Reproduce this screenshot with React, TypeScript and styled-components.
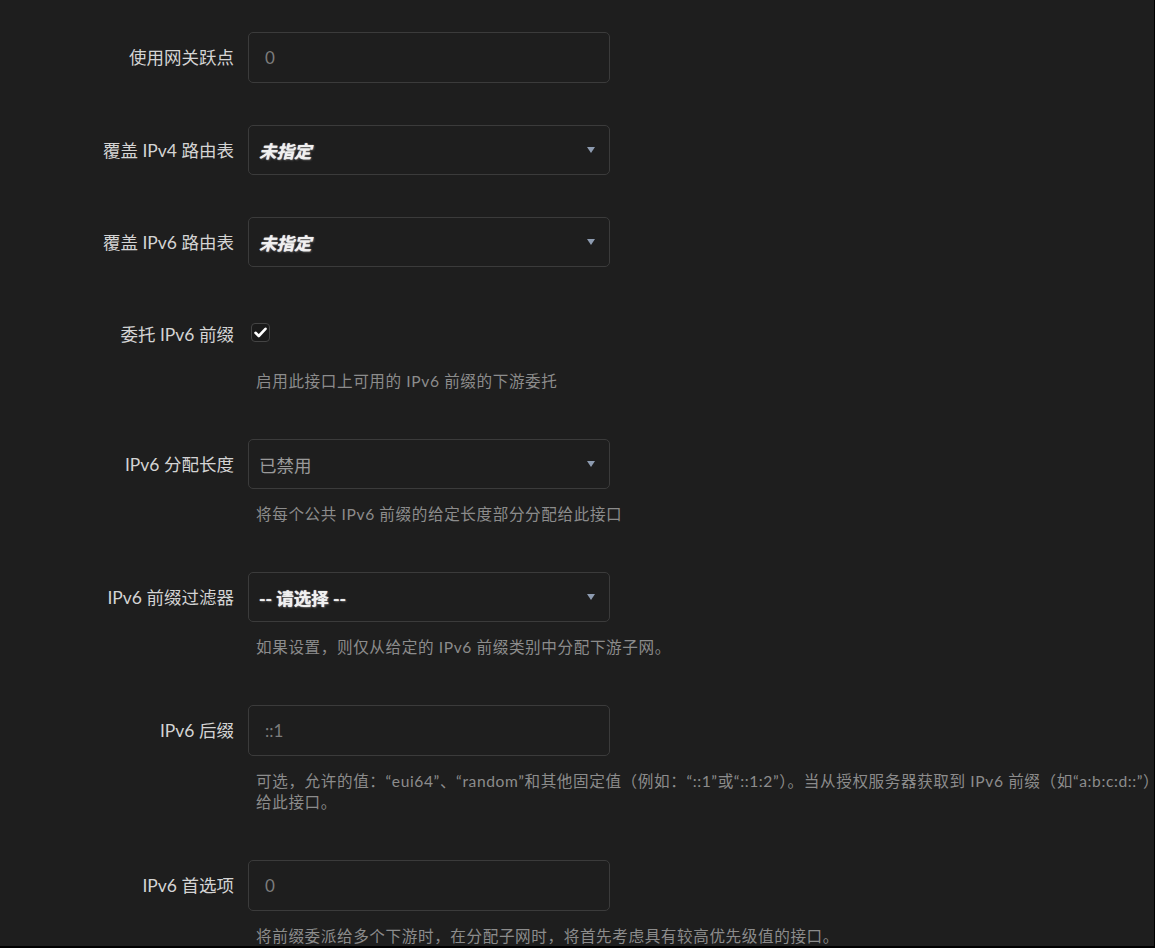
import React from "react";
import styled, { createGlobalStyle } from "styled-components";

const GlobalStyle = createGlobalStyle`
    html, body {
        margin: 0;
        padding: 0;
        background: #000;
        overflow: hidden;
    }

    body {
        font-family: "Lato", "Noto Sans CJK SC", sans-serif;
    }
`;

type FieldProps = {
    label: string;
    desc?: string[];
    children: React.ReactNode;
};

const Field = ({ label, desc, children }: FieldProps) => (
    <StyledRow>
        <StyledLabel>{label}</StyledLabel>
        <StyledControlCol>
            <StyledControl>{children}</StyledControl>
            {desc && (
                <StyledDesc>
                    {desc.map((line) => (
                        <div key={line}>{line}</div>
                    ))}
                </StyledDesc>
            )}
        </StyledControlCol>
    </StyledRow>
);

const Select = ({
    value,
    variant,
}: {
    value: string;
    variant: "italic" | "bold" | "plain";
}) => (
    <StyledSelectWrap>
        <StyledSelectValue $variant={variant}>{value}</StyledSelectValue>
    </StyledSelectWrap>
);

const App = () => {
    return (
        <>
            <GlobalStyle />
            <StyledPage>
                <Field label="使用网关跃点">
                    <StyledInput placeholder="0" />
                </Field>

                <Field label="覆盖 IPv4 路由表">
                    <Select value="未指定" variant="italic" />
                </Field>

                <Field label="覆盖 IPv6 路由表">
                    <Select value="未指定" variant="italic" />
                </Field>

                <Field
                    label="委托 IPv6 前缀"
                    desc={["启用此接口上可用的 IPv6 前缀的下游委托"]}
                >
                    <StyledCheckWrap>
                        <StyledCheckbox>
                            <svg width="13" height="11" viewBox="0 0 13 11">
                                <path
                                    d="M1.5 5.8 L4.8 9 L11.5 1.8"
                                    fill="none"
                                    stroke="#fff"
                                    strokeWidth="2.6"
                                    strokeLinecap="round"
                                    strokeLinejoin="round"
                                />
                            </svg>
                        </StyledCheckbox>
                    </StyledCheckWrap>
                </Field>

                <Field
                    label="IPv6 分配长度"
                    desc={["将每个公共 IPv6 前缀的给定长度部分分配给此接口"]}
                >
                    <Select value="已禁用" variant="plain" />
                </Field>

                <Field
                    label="IPv6 前缀过滤器"
                    desc={["如果设置，则仅从给定的 IPv6 前缀类别中分配下游子网。"]}
                >
                    <Select value="-- 请选择 --" variant="bold" />
                </Field>

                <Field
                    label="IPv6 后缀"
                    desc={[
                        "可选，允许的值：“eui64”、“random”和其他固定值（例如：“::1”或“::1:2”）。当从授权服务器获取到 IPv6 前缀（如“a:b:c:d::”）时，使用后缀（如“::1”）形成 IPv6 地址（“a:b:c:d::1”）并分配",
                        "给此接口。",
                    ]}
                >
                    <StyledInput placeholder="::1" />
                </Field>

                <Field
                    label="IPv6 首选项"
                    desc={[
                        "将前缀委派给多个下游时，在分配子网时，将首先考虑具有较高优先级值的接口。",
                    ]}
                >
                    <StyledInput placeholder="0" />
                </Field>
            </StyledPage>
        </>
    );
};

export default App;

const StyledPage = styled.div`
    width: 1154px;
    height: 946px;
    overflow: hidden;
    box-sizing: border-box;
    padding-top: 32px;
    background-color: #1e1e1e;
`;

const StyledRow = styled.div`
    display: flex;
    align-items: flex-start;
    margin-bottom: 42px;
`;

const StyledLabel = styled.div`
    box-sizing: border-box;
    width: 234px;
    height: 50px;
    padding-bottom: 2px;
    flex-shrink: 0;
    display: flex;
    align-items: center;
    justify-content: flex-end;

    font-size: 17.5px;
    color: #d4d4d4;
    white-space: nowrap;
`;

const StyledControlCol = styled.div`
    margin-left: 14px;
    display: flex;
    flex-direction: column;
`;

const StyledControl = styled.div`
    width: 362px;
`;

const StyledDesc = styled.div`
    margin: 15px 0 5px 8px;
    font-size: 15.6px;
    letter-spacing: 0.6px;
    line-height: 21px;
    color: #8c8c8c;
    white-space: nowrap;
`;

const StyledInput = styled.input`
    all: unset;
    box-sizing: border-box;
    width: 100%;
    height: 51px;
    padding: 0 16px;
    border: 1px solid #3b3b3b;
    border-radius: 5px;

    font-family: "Lato", "Noto Sans CJK SC", sans-serif;
    font-size: 17px;
    color: #cfcfcf;

    &::placeholder {
        color: #7c7c7c;
    }
`;

const StyledSelectWrap = styled.div`
    position: relative;
    box-sizing: border-box;
    width: 100%;
    height: 50px;
    padding: 0 10px;
    border: 1px solid #3b3b3b;
    border-radius: 5px;
    display: flex;
    align-items: center;

    &::after {
        content: "";
        position: absolute;
        right: 14px;
        top: 50%;
        margin-top: -3px;
        border-left: 4.5px solid transparent;
        border-right: 4.5px solid transparent;
        border-top: 6px solid #8d9bb0;
    }
`;

const StyledSelectValue = styled.span<{ $variant: "italic" | "bold" | "plain" }>`
    font-size: 17.5px;
    font-weight: ${({ $variant }) => ($variant === "plain" ? 400 : 700)};
    font-style: ${({ $variant }) => ($variant === "italic" ? "italic" : "normal")};
    color: ${({ $variant }) => ($variant === "plain" ? "#9a9a9a" : "#f0f0f0")};
    text-shadow: ${({ $variant }) =>
        $variant === "plain" ? "none" : "0 0 1px #fff, 1px 1px 2px #555"};
`;

const StyledCheckWrap = styled.div`
    height: 47px;
    display: flex;
    align-items: center;
    padding-left: 3px;
`;

const StyledCheckbox = styled.span`
    box-sizing: border-box;
    width: 19px;
    height: 19px;
    border: 1px solid #444;
    border-radius: 4px;
    background-color: #1a1a1a;
    display: flex;
    justify-content: center;
    align-items: center;
`;
